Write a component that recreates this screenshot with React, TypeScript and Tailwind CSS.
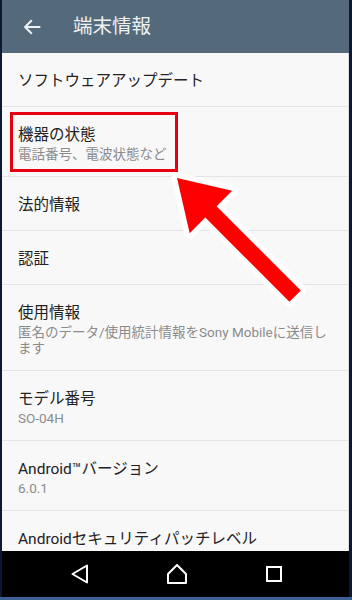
import React from 'react';

type Row = { title: string; sub?: string };

const rows: Row[] = [
  { title: 'ソフトウェアアップデート' },
  { title: '機器の状態', sub: '電話番号、電波状態など' },
  { title: '法的情報' },
  { title: '認証' },
  { title: '使用情報', sub: '匿名のデータ/使用統計情報をSony Mobileに送信します' },
  { title: 'モデル番号', sub: 'SO-04H' },
  { title: 'Android™バージョン', sub: '6.0.1' },
  { title: 'Androidセキュリティパッチレベル' },
];

function NavBar() {
  return (
    <div className="h-[46px] bg-black flex items-center justify-center gap-[73px] pl-[2px]">
      <svg width="24" height="24" viewBox="0 0 24 24" fill="none" stroke="#fff" strokeWidth="2" strokeLinejoin="round">
        <path d="M4.5 12 L19 3.5 V20.5 Z" />
      </svg>
      <svg width="24" height="24" viewBox="0 0 24 24" fill="none" stroke="#fff" strokeWidth="2" strokeLinejoin="round">
        <path d="M3 21 V12 L12 3 L21 12 V21 Z" />
      </svg>
      <svg width="24" height="24" viewBox="0 0 24 24" fill="none" stroke="#fff" strokeWidth="2">
        <rect x="5" y="5" width="14" height="14" />
      </svg>
    </div>
  );
}

export default function App() {
  return (
    <div
      className="relative w-[352px] h-[600px] overflow-hidden bg-[#0d1832] pl-[2px] pr-[3px] flex flex-col"
      style={{ fontFamily: 'Roboto, "Noto Sans CJK JP", sans-serif' }}
    >
      <header className="h-[53px] shrink-0 bg-[#546a7b] flex items-center">
        <svg className="ml-[19px]" width="22" height="22" viewBox="0 0 24 24" fill="none" stroke="#eef1f3" strokeWidth="2.2" strokeLinecap="square">
          <path d="M20 12 H5 M11 5.5 L4.5 12 L11 18.5" />
        </svg>
        <h1 className="ml-[30px] text-[19.5px] text-[#eef1f3] leading-none">端末情報</h1>
      </header>

      <div className="flex-1 bg-[#f8f8f9] border-r border-[#dcdcdf] overflow-hidden">
        {rows.map((r) => (
          <div key={r.title} className="pl-4 pr-[14px] pt-[17px] pb-[14px] border-b border-[#e4e4e6]">
            <div className="text-[15.5px] leading-[22px] text-[#222]">{r.title}</div>
            {r.sub && <div className="text-[13.5px] leading-[16px] text-[#8b8b8b]">{r.sub}</div>}
          </div>
        ))}
      </div>

      <NavBar />
      <div className="h-[3px] shrink-0 bg-[#3d5f93] -ml-[2px] -mr-[3px]" />

      <div className="absolute left-[10px] top-[112px] w-[168px] h-[60px] border-[3px] border-[#e60012]" />

      <svg className="absolute inset-0 pointer-events-none" width="352" height="600">
        <polygon
          points="177,178 232.2,190.7 216.6,206.3 300.8,290.4 289.4,301.8 205.3,217.6 189.7,233.2"
          fill="#f00"
          stroke="#fff"
          strokeWidth="11"
          strokeLinejoin="round"
          paintOrder="stroke"
        />
      </svg>
    </div>
  );
}
